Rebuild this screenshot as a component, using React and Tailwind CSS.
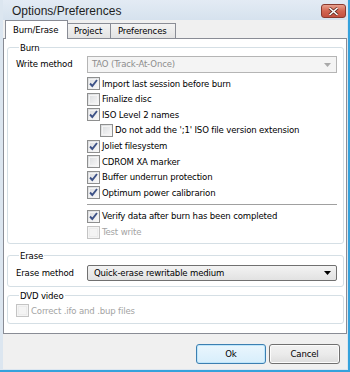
const font = { fontFamily: '"DejaVu Sans Condensed", "Liberation Sans", Arial, sans-serif' };
const titleFont = { fontFamily: '"Liberation Sans", Arial, sans-serif' };

const Check = ({ checked, disabled }) => (
  <span
    className={`relative w-[13px] h-[13px] shrink-0 border ${
      disabled ? 'border-[#c4c4c4] bg-[#f4f4f4]' : 'border-[#8e8f8f] bg-gradient-to-br from-[#d8dadd] to-[#fafafa]'
    } p-[1px]`}
  >
    <span className={`block w-full h-full border ${disabled ? 'border-[#ececec]' : 'border-[#f4f4f4]'}`} />
    {checked && (
      <svg className="absolute left-0 top-0" width="11" height="11" viewBox="0 0 11 11">
        <path d="M2 5.5 L4.3 8 L9 2" fill="none" stroke="#3d5287" strokeWidth="1.9" />
      </svg>
    )}
  </span>
);

const CheckRow = ({ label, checked, disabled, indent }) => (
  <div className={`flex items-center h-[15.6px] ${indent ? 'pl-[13px]' : ''}`}>
    <Check checked={checked} disabled={disabled} />
    <span className={`ml-[2px] ${disabled ? 'text-[#a3a3a3]' : 'text-black'}`}>{label}</span>
  </div>
);

const Group = ({ title, className, children }) => (
  <fieldset className={`border border-[#d5dfe5] rounded-[3px] ${className}`}>
    <legend className="ml-[3px] px-[1px] leading-[13px]">{title}</legend>
    {children}
  </fieldset>
);

const Arrow = ({ color }) => (
  <svg width="7" height="4" viewBox="0 0 7 4">
    <path d="M0 0 H7 L3.5 4 Z" fill={color} />
  </svg>
);

const App = () => {
  return (
    <div
      className="w-[350px] h-[372px] flex flex-col bg-[#dce6f0] pl-[3px] pr-[1px] pb-[1px] border-r-2 border-b-2 border-[#35a2dc] text-[9.5px] tracking-[-0.15px] text-black"
      style={font}
    >
      {/* title bar */}
      <div className="h-[20px] flex items-start justify-between bg-gradient-to-b from-[#e3ebf4] to-[#d6e2ee]">
        <span className="pl-[9px] pt-[4px] text-[12px] tracking-normal leading-[14px] text-[#1e1e1e]" style={titleFont}>
          Options/Preferences
        </span>
        <div className="mt-[4px] mr-[1px] w-[25px] h-[14px] rounded-[3px] border border-[#8a3a2e] bg-gradient-to-b from-[#e8a290] via-[#d26450] to-[#c45040] flex items-center justify-center">
          <svg width="11" height="9" viewBox="0 0 11 9">
            <path d="M1.5 1 L9.5 8 M9.5 1 L1.5 8" stroke="#5a2a22" strokeWidth="3" />
            <path d="M1.5 1 L9.5 8 M9.5 1 L1.5 8" stroke="#ffffff" strokeWidth="1.6" />
          </svg>
        </div>
      </div>

      {/* client area */}
      <div className="flex-1 flex flex-col bg-[#f0f0f0]">
        {/* tabs */}
        <div className="h-[18px] flex items-end pl-[2px]">
          <div className="relative z-10 -mb-[1px] w-[63px] h-[19px] bg-white border border-b-0 border-[#898c95] pl-[7px] pt-[2px] leading-[14px]">
            Burn/Erase
          </div>
          <div className="w-[43px] h-[15px] border border-l-0 border-b-0 border-[#898c95] bg-gradient-to-b from-[#f3f3f3] to-[#e3e3e3] pl-[6px] leading-[14px]">
            Project
          </div>
          <div className="w-[65px] h-[15px] border border-l-0 border-b-0 border-[#898c95] bg-gradient-to-b from-[#f3f3f3] to-[#e3e3e3] pl-[7px] leading-[14px]">
            Preferences
          </div>
        </div>

        {/* panel */}
        <div className="h-[296px] bg-white border border-[#898c95] flex flex-col pl-[3px] pr-[2px]">
          <Group title="Burn" className="mt-[2px] pl-[8px] pr-[6px] pb-[3px]">
            <div className="flex items-center mt-[2px]">
              <span className="w-[71px]">Write method</span>
              <div className="flex-1 h-[17px] border border-[#b5b5b5] bg-[#f4f4f4] flex items-center justify-between pl-[4px] pr-[5px] text-[#8d8d8d]">
                <span>TAO (Track-At-Once)</span>
                <Arrow color="#a9a9a9" />
              </div>
            </div>
            <div className="pl-[71px] mt-[3px]">
              <CheckRow label="Import last session before burn" checked />
              <CheckRow label="Finalize disc" />
              <CheckRow label="ISO Level 2 names" checked />
              <CheckRow label="Do not add the ';1' ISO file version extension" indent />
              <CheckRow label="Joliet filesystem" checked />
              <CheckRow label="CDROM XA marker" />
              <CheckRow label="Buffer underrun protection" checked />
              <CheckRow label="Optimum power calibrarion" checked />
              <div className="mt-[3px] mb-[3px] h-[2px] border-t border-t-[#a0a0a0] border-b border-b-white" />
              <CheckRow label="Verify data after burn has been completed" checked />
              <CheckRow label="Test write" disabled />
            </div>
          </Group>

          <Group title="Erase" className="mt-[5px] pl-[8px] pr-[6px] pb-[5px]">
            <div className="flex items-center mt-[3px]">
              <span className="w-[71px]">Erase method</span>
              <div className="flex-1 h-[16px] border border-[#707070] rounded-[2px] bg-gradient-to-b from-[#f3f3f3] to-[#e2e2e2] flex items-center justify-between pl-[6px] pr-[5px]">
                <span>Quick-erase rewritable medium</span>
                <Arrow color="#000000" />
              </div>
            </div>
          </Group>

          <Group title="DVD video" className="mt-[2px] pl-[8px] pr-[6px] pb-[4px]">
            <div className="mt-[1px]">
              <CheckRow label="Correct .ifo and .bup files" disabled />
            </div>
          </Group>
        </div>

        {/* buttons */}
        <div className="flex justify-end gap-[3px] pt-[10px] pr-[7px]">
          <button className="w-[70px] h-[20px] rounded-[3px] border border-[#3c7fb1] bg-gradient-to-b from-[#eaf6fd] to-[#d7eefb] shadow-[inset_0_0_0_1px_#bfe6fb]">
            Ok
          </button>
          <button className="w-[71px] h-[20px] rounded-[3px] border border-[#707070] bg-gradient-to-b from-[#f2f2f2] via-[#ebebeb] to-[#dddddd] shadow-[inset_0_0_0_1px_#fcfcfc]">
            Cancel
          </button>
        </div>
      </div>
    </div>
  );
};

export default App;
